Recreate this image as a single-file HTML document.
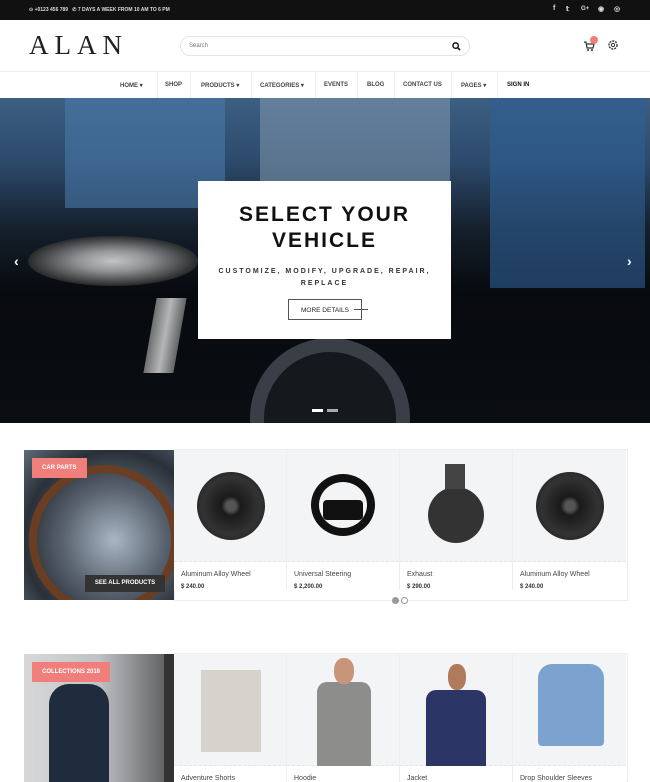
<!DOCTYPE html>
<html><head><meta charset="utf-8"><style>
*{margin:0;padding:0;box-sizing:border-box}
body{width:650px;height:782px;overflow:hidden;background:#fff;font-family:"Liberation Sans",sans-serif;position:relative}
.a{position:absolute}
.top{left:0;top:0;width:650px;height:20px;background:#111}
.top span{color:#ddd;font-size:5px;font-weight:bold;position:absolute;top:7px}
.nav a{position:absolute;top:82px;font-size:6px;font-weight:bold;color:#444;text-decoration:none}
.sep{position:absolute;top:72px;width:1px;height:26px;background:#eee}
.card{position:absolute;width:113px;background:#fff;border-right:1px solid #eee}
.card .img{height:112px;background:#f3f4f6;border-bottom:1px dashed #e6e6e6;position:relative}
.card .n{font-size:7px;color:#444;margin:9px 0 0 7px}
.card .p{font-size:6px;color:#333;font-weight:bold;margin:6px 0 0 7px}
.tag{position:absolute;background:#f07f7b;color:#fff;font-size:6px;font-weight:bold;padding:7px 10px}
</style></head><body>
<div class="a top">
<span style="left:29px">⊙ +0123 456 789 &nbsp; ✆ 7 DAYS A WEEK FROM 10 AM TO 6 PM</span>
<span style="left:553px;font-size:7px;top:5px">f</span>
<span style="left:566px;font-size:7px;top:5px">𝕥</span>
<span style="left:581px;font-size:6px;top:6px">G+</span>
<span style="left:598px;font-size:7px;top:5px">◉</span>
<span style="left:614px;font-size:7px;top:5px">◎</span>
</div>
<div class="a" style="left:29px;top:30px;font-family:'Liberation Serif',serif;font-size:27px;letter-spacing:6px;color:#222">ALAN</div>
<div class="a" style="left:180px;top:36px;width:290px;height:20px;border:1px solid #e4e4e4;border-radius:10px;font-size:6px;color:#777;padding:6px 8px">Search
<svg class="a" style="right:8px;top:5px" width="9" height="9" viewBox="0 0 10 10"><circle cx="4" cy="4" r="3" fill="none" stroke="#111" stroke-width="1.6"/><path d="M6 6l3 3" stroke="#111" stroke-width="1.8"/></svg></div>
<svg class="a" style="left:583px;top:40px" width="12" height="12" viewBox="0 0 12 12"><path d="M1 2h2l1 6h6l1-4H4" fill="none" stroke="#333" stroke-width="1.2"/><circle cx="5" cy="10" r="1" fill="#333"/><circle cx="9" cy="10" r="1" fill="#333"/></svg>
<div class="a" style="left:590px;top:36px;width:8px;height:8px;border-radius:50%;background:#f07f7b"></div>
<svg class="a" style="left:607px;top:39px" width="12" height="12" viewBox="0 0 12 12"><circle cx="6" cy="6" r="4" fill="none" stroke="#333" stroke-width="1.4" stroke-dasharray="2 1"/><circle cx="6" cy="6" r="1.6" fill="none" stroke="#333"/></svg>
<div class="a" style="left:0;top:71px;width:650px;height:1px;background:#eee"></div>
<div class="nav">
<a style="left:120px">HOME ▾</a><div class="sep" style="left:157px"></div>
<a style="left:165px">SHOP</a><div class="sep" style="left:190px"></div>
<a style="left:201px">PRODUCTS ▾</a><div class="sep" style="left:251px"></div>
<a style="left:260px">CATEGORIES ▾</a><div class="sep" style="left:315px"></div>
<a style="left:324px">EVENTS</a><div class="sep" style="left:357px"></div>
<a style="left:367px">BLOG</a><div class="sep" style="left:394px"></div>
<a style="left:403px">CONTACT US</a><div class="sep" style="left:451px"></div>
<a style="left:461px">PAGES ▾</a><div class="sep" style="left:497px"></div>
<a style="left:507px;color:#111">SIGN IN</a>
</div>
<div class="a" style="left:0;top:98px;width:650px;height:325px;background:linear-gradient(180deg,#3d5f82 0%,#2c4a6b 20%,#15202c 40%,#070a0e 60%,#0a0d12 100%);overflow:hidden">
<div class="a" style="left:65px;top:0;width:160px;height:110px;background:#4a78a8;opacity:.6"></div>
<div class="a" style="left:260px;top:0;width:190px;height:95px;background:#8aa0b5;opacity:.5"></div>
<div class="a" style="left:490px;top:0;width:155px;height:190px;background:#2f5f95;opacity:.6"></div>
<div class="a" style="left:28px;top:138px;width:170px;height:50px;border-radius:50%;background:radial-gradient(#fff,#bbb 30%,#333 70%,transparent);opacity:.75"></div>
<div class="a" style="left:150px;top:200px;width:30px;height:75px;background:linear-gradient(90deg,#999,#fff,#888);transform:skewX(-10deg);opacity:.7"></div>
<div class="a" style="left:250px;top:240px;width:160px;height:160px;border-radius:50%;border:14px solid #3a3f47;background:#15181d"></div>
<div class="a" style="left:14px;top:155px;color:#fff;font-size:14px;font-weight:bold">‹</div>
<div class="a" style="left:627px;top:155px;color:#fff;font-size:14px;font-weight:bold">›</div>
<div class="a" style="left:312px;top:311px;width:11px;height:3px;background:#fff"></div>
<div class="a" style="left:327px;top:311px;width:11px;height:3px;background:#aaa"></div>
</div>
<div class="a" style="left:198px;top:181px;width:253px;height:158px;background:#fff;text-align:center">
<div style="font-size:21px;font-weight:bold;letter-spacing:2px;line-height:26px;margin-top:21px;color:#111">SELECT YOUR<br>VEHICLE</div>
<div style="font-size:7px;letter-spacing:2px;line-height:12px;margin-top:12px;color:#333;font-weight:bold">CUSTOMIZE, MODIFY, UPGRADE, REPAIR,<br>REPLACE</div>
<div style="position:absolute;left:90px;top:118px;width:74px;height:21px;border:1px solid #555;font-size:6.5px;padding-top:7px;color:#222;text-align:left;padding-left:12px">MORE DETAILS</div>
<div style="position:absolute;left:156px;top:128px;width:14px;height:1px;background:#555"></div>
</div>
<!-- section 1 -->
<div class="a" style="left:24px;top:450px;width:150px;height:150px;background:radial-gradient(circle at 60% 60%,#a9b6c4,#59636f 40%,#2a3038 70%,#5d6b7a);overflow:hidden">
<div class="a" style="left:5px;top:15px;width:150px;height:150px;border-radius:50%;border:8px solid #6b3d22"></div>
</div>
<div class="tag" style="left:32px;top:458px">CAR PARTS</div>
<div class="a" style="left:85px;top:575px;width:80px;height:17px;background:#333;color:#fff;font-size:6px;font-weight:bold;text-align:center;padding-top:5px">SEE ALL PRODUCTS</div>
<div class="a" style="left:174px;top:449px;width:454px;height:152px;border:1px solid #eee"></div>
<div class="card" style="left:174px;top:450px"><div class="img"><div class="a" style="left:23px;top:22px;width:68px;height:68px;border-radius:50%;background:radial-gradient(#555 10%,#1a1a1a 20%,#333 60%,#111)"></div></div><div class="n">Aluminum Alloy Wheel</div><div class="p">$ 240.00</div></div>
<div class="card" style="left:287px;top:450px"><div class="img"><div class="a" style="left:24px;top:24px;width:64px;height:62px;border-radius:50%;border:8px solid #111"></div><div class="a" style="left:36px;top:50px;width:40px;height:20px;background:#111;border-radius:4px"></div></div><div class="n">Universal Steering</div><div class="p">$ 2,200.00</div></div>
<div class="card" style="left:400px;top:450px"><div class="img"><div class="a" style="left:28px;top:37px;width:56px;height:56px;border-radius:50%;background:#333"></div><div class="a" style="left:45px;top:14px;width:20px;height:25px;background:#444"></div></div><div class="n">Exhaust</div><div class="p">$ 290.00</div></div>
<div class="card" style="left:513px;top:450px;border:0"><div class="img"><div class="a" style="left:23px;top:22px;width:68px;height:68px;border-radius:50%;background:radial-gradient(#555 10%,#1a1a1a 20%,#333 60%,#111)"></div></div><div class="n">Aluminum Alloy Wheel</div><div class="p">$ 240.00</div></div>
<div class="a" style="left:392px;top:597px;width:7px;height:7px;border-radius:50%;background:#999"></div>
<div class="a" style="left:401px;top:597px;width:7px;height:7px;border-radius:50%;border:1px solid #999;background:#fff"></div>
<!-- section 2 -->
<div class="a" style="left:24px;top:654px;width:150px;height:128px;background:linear-gradient(90deg,#d8d8d8,#bfc2c6 50%,#555 100%);overflow:hidden">
<div class="a" style="left:25px;top:30px;width:60px;height:110px;background:#1f2c3e;border-radius:20px 20px 0 0"></div>
<div class="a" style="left:140px;top:0;width:10px;height:128px;background:#333"></div>
</div>
<div class="tag" style="left:32px;top:662px">COLLECTIONS 2018</div>
<div class="a" style="left:174px;top:653px;width:454px;height:129px;border:1px solid #eee"></div>
<div class="card" style="left:174px;top:654px"><div class="img"><div class="a" style="left:27px;top:16px;width:60px;height:82px;background:#d6d3cc"></div></div><div class="n">Adventure Shorts</div></div>
<div class="card" style="left:287px;top:654px"><div class="img"><div class="a" style="left:30px;top:28px;width:54px;height:84px;background:#8d8e8c;border-radius:10px 10px 0 0"></div><div class="a" style="left:47px;top:4px;width:20px;height:26px;background:#c8957b;border-radius:45%"></div></div><div class="n">Hoodie</div></div>
<div class="card" style="left:400px;top:654px"><div class="img"><div class="a" style="left:26px;top:36px;width:60px;height:76px;background:#2b3566;border-radius:10px 10px 0 0"></div><div class="a" style="left:48px;top:10px;width:18px;height:26px;background:#b07a5d;border-radius:45%"></div></div><div class="n">Jacket</div></div>
<div class="card" style="left:513px;top:654px;border:0"><div class="img"><div class="a" style="left:25px;top:10px;width:66px;height:82px;background:#7ca3cf;border-radius:14px 14px 4px 4px"></div></div><div class="n">Drop Shoulder Sleeves</div></div>
</body></html>
